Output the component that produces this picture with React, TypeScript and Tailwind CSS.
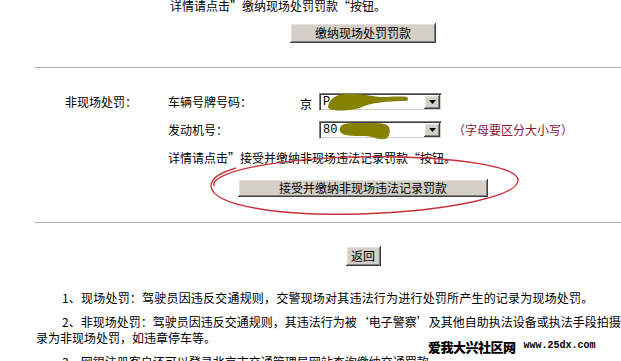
import React from 'react';

const raised =
  'bg-[#d4d0c8] text-black shadow-[inset_-1px_-1px_#404040,inset_1px_1px_#ffffff,inset_-2px_-2px_#808080,inset_2px_2px_#e4e1da]';

function DropArrow() {
  return (
    <div className={`${raised} w-4 h-[14px] flex items-center justify-center`}>
      <svg width="7" height="4" viewBox="0 0 7 4">
        <path d="M0 0h7L3.5 4z" fill="#000" />
      </svg>
    </div>
  );
}

function Select({ value, blob }: { value: string; blob: string }) {
  return (
    <div className="relative w-[123px] h-[18px] bg-white border border-t-[#808080] border-l-[#808080] border-r-white border-b-white shadow-[inset_1px_1px_#404040,inset_-1px_-1px_#d4d0c8] flex items-center justify-between pl-[3px] pr-[1px]">
      <span className="font-['Liberation_Mono',monospace] text-[12px] leading-none">{value}</span>
      <DropArrow />
      <svg className="absolute -left-px -top-px overflow-visible" width="123" height="18" viewBox="0 0 123 18">
        <path d={blob} fill="#858200" />
      </svg>
    </div>
  );
}

export default function App() {
  return (
    <div className="relative w-[621px] h-[361px] overflow-hidden bg-white text-black text-[12px] leading-4 font-['Noto_Sans_CJK_SC','Liberation_Sans',sans-serif]">
      <div className="ml-[35px] w-[656px]">
        {/* 现场处罚 */}
        <div className="-mt-[2px] pl-[135px] h-4">详情请点击”缴纳现场处罚罚款“按钮。</div>
        <div className="flex justify-center mt-[9px]">
          <button className={`${raised} w-[146px] h-[20px] text-[12px] flex items-center justify-center`}>
            缴纳现场处罚罚款
          </button>
        </div>
        <div className="h-px bg-[#acacac] mt-[24px]" />

        {/* 非现场处罚 */}
        <div className="flex items-center h-[18px] mt-[25px]">
          <div className="w-[133px] pl-[30px]">非现场处罚：</div>
          <div className="w-[132px]">车辆号牌号码：</div>
          <div className="w-[19px] pt-[4px]">京</div>
          <Select
            value="P"
            blob="M9 14 C10 6 16 2 26 1 C40 0 50 3 60 4 C72 4 82 3 88 4 C90 6 89 8 86 8 C72 8 62 9 52 11 C44 13 38 17 30 17 C20 18 10 18 9 14 Z"
          />
        </div>
        <div className="flex items-center h-[18px] mt-[10px]">
          <div className="w-[151px] ml-[133px]">发动机号：</div>
          <Select
            value="80"
            blob="M22 5 C24 1 40 2 50 2 C60 2 68 2 70 6 C72 11 70 17 66 18 C58 19 54 15 46 15 C36 15 28 15 24 13 C20 11 20 8 22 5 Z"
          />
          <span className="ml-[11px] text-[#8b1538]">（字母要区分大小写）</span>
        </div>
        <div className="mt-[11px] pl-[133px] h-4">详情请点击”接受并缴纳非现场违法记录罚款“按钮。</div>
        <div className="flex justify-center mt-[13px]">
          <button className={`${raised} w-[250px] h-[18px] text-[12px] flex items-center justify-center`}>
            接受并缴纳非现场违法记录罚款
          </button>
        </div>
        <div className="h-px bg-[#acacac] mt-[25px]" />

        <div className="flex justify-center mt-[23px]">
          <button className={`${raised} w-[35px] h-[20px] text-[12px] flex items-center justify-center`}>
            返回
          </button>
        </div>

        {/* 说明 */}
        <div className="mt-[24px] pl-px whitespace-nowrap">
          <p className="indent-[26px] tracking-[0.2px]">1、现场处罚：驾驶员因违反交通规则，交警现场对其违法行为进行处罚所产生的记录为现场处罚。</p>
          <p className="indent-[26px] mt-2">
            2、非现场处罚：驾驶员因违反交通规则，其违法行为被‘电子警察’及其他自助执法设备或执法手段拍摄记
            <br />
            录为非现场处罚，如违章停车等。
          </p>
          <p className="indent-[26px] mt-2">3、网银注册客户还可以登录北京市交通管理局网站查询缴纳交通罚款</p>
        </div>
      </div>

      {/* red hand-drawn circle */}
      <svg className="absolute left-0 top-0 pointer-events-none" width="621" height="361" viewBox="0 0 621 361">
        <path
          d="M214 186 C208 170 300 154 400 157 C470 159 520 168 518 181 C516 196 450 211 360 214 C280 216 212 206 211 186 C211 178 222 172 236 168"
          fill="none"
          stroke="#c8323c"
          strokeWidth="1.4"
        />
      </svg>

      {/* watermark */}
      <div className="absolute left-[428px] top-[339px] flex items-center h-[14px]">
        <span className="text-[13px] font-black tracking-[-0.5px] leading-none">爱我大兴社区网</span>
        <span className="ml-[8px] font-['Liberation_Mono',monospace] font-bold text-[10px] leading-none">www.25dx.com</span>
      </div>
    </div>
  );
}
